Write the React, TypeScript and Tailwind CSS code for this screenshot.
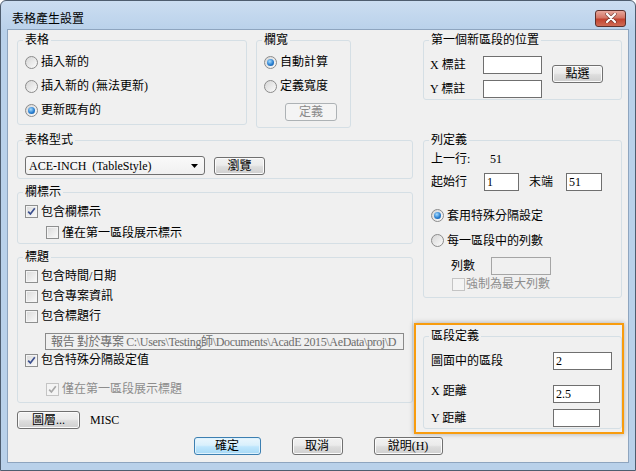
import clsx from "clsx";
import type { ReactNode } from "react";

const btn =
  "flex shrink-0 items-center justify-center rounded-[3px] border border-[#707070] bg-[linear-gradient(#f2f2f2,#ebebeb_45%,#dddddd_55%,#cfcfcf)] shadow-[inset_0_0_0_1px_#fbfbfb]";

function Group({ label, className, children }: { label: string; className?: string; children: ReactNode }) {
  return (
    <fieldset className={clsx("shrink-0 rounded-[3px] border border-[#d5dfe5]", className)}>
      <legend className="ml-[5px] px-[2px] leading-[16px]">{label}</legend>
      {children}
    </fieldset>
  );
}

function Radio({ checked }: { checked?: boolean }) {
  return (
    <span className="flex h-[13px] w-[13px] shrink-0 items-center justify-center rounded-full border border-[#8b8b8b] bg-[linear-gradient(135deg,#d6d6d6,#fbfbfb)]">
      {checked && (
        <span className="h-[7px] w-[7px] rounded-full bg-[radial-gradient(circle_at_40%_35%,#a6dcff,#2a7fd0_55%,#0c4e96)]" />
      )}
    </span>
  );
}

function Check({ checked, disabled }: { checked?: boolean; disabled?: boolean }) {
  return (
    <span
      className={clsx(
        "flex h-[13px] w-[13px] shrink-0 items-center justify-center border",
        disabled
          ? "border-[#c4c4c4] bg-[#f4f4f4]"
          : "border-[#8e8f8f] bg-[linear-gradient(135deg,#d9d9d9,#fbfbfb)] shadow-[inset_0_0_0_1px_#f4f4f4]"
      )}
    >
      {checked && (
        <svg width="9" height="9" viewBox="0 0 9 9">
          <path
            d="M1.2 4.6 L3.4 7 L7.8 1.2"
            fill="none"
            stroke={disabled ? "#a8a8a8" : "#3b4f8e"}
            strokeWidth="1.7"
          />
        </svg>
      )}
    </span>
  );
}

function Field({ value, className, disabled }: { value?: string; className?: string; disabled?: boolean }) {
  return (
    <div
      className={clsx(
        "flex h-[18px] shrink-0 items-center border pl-[2px]",
        disabled ? "border-[#a5a5a5] bg-[#f0f0f0]" : "border-[#6f6f6f] bg-white",
        className
      )}
    >
      {value}
    </div>
  );
}

export default function App() {
  return (
    <div className="h-[471px] w-[636px] bg-white font-['Liberation_Serif','Noto_Sans_CJK_TC',serif] text-[12px] leading-[16px] text-black">
      <div className="flex h-full flex-col rounded-t-[6px] border border-[#4e5d6f] bg-[linear-gradient(#cbddf1,#b9d1ea_30px)]">
        {/* title bar */}
        <div className="flex h-[28px] shrink-0 items-center pl-[11px] pr-[9px] pt-[6px]">
          <span className="font-['Noto_Sans_CJK_TC',sans-serif]">表格產生設置</span>
          <div className="ml-auto flex h-[17px] w-[31px] items-center justify-center rounded-[3px] border border-[#5c302c] bg-[linear-gradient(#e8a89c,#d47565_45%,#c2432f_55%,#cf6b55)]">
            <svg width="12" height="10" viewBox="0 0 12 10">
              <path d="M2 1 L10 9 M10 1 L2 9" stroke="#3a1d1a" strokeWidth="3.6" strokeLinecap="round" opacity="0.55" />
              <path d="M2 1 L10 9 M10 1 L2 9" stroke="#ffffff" strokeWidth="2.2" strokeLinecap="round" />
            </svg>
          </div>
        </div>

        {/* client area */}
        <div className="mx-[6px] flex h-[434px] shrink-0 flex-col border border-[#8ea5bf] bg-[#f0f0f0] pl-[9px] pr-[6px] pt-[2px]">
          {/* top row */}
          <div className="flex items-start">
            <Group label="表格" className="h-[93px] w-[230px]">
              <div className="flex flex-col pl-[7px] pt-[2px]">
                <div className="flex h-6 items-center gap-[3px]">
                  <Radio />
                  <span>插入新的</span>
                </div>
                <div className="flex h-6 items-center gap-[3px]">
                  <Radio />
                  <span>插入新的 (無法更新)</span>
                </div>
                <div className="flex h-6 items-center gap-[3px]">
                  <Radio checked />
                  <span>更新既有的</span>
                </div>
              </div>
            </Group>

            <Group label="欄寬" className="ml-[9px] h-[96px] w-[95px]">
              <div className="flex flex-col pl-[7px] pt-[2px]">
                <div className="flex h-6 items-center gap-[3px]">
                  <Radio checked />
                  <span>自動計算</span>
                </div>
                <div className="flex h-6 items-center gap-[3px]">
                  <Radio />
                  <span>定義寬度</span>
                </div>
                <div className="ml-[21px] mt-[5px] flex h-[18px] w-[52px] items-center justify-center rounded-[3px] border border-[#adb2b5] bg-[#f4f4f4] text-[#8a8a8a]">
                  定義
                </div>
              </div>
            </Group>

            <Group label="第一個新區段的位置" className="ml-auto h-[68px] w-[199px]">
              <div className="flex items-start pl-[6px] pt-[8px]">
                <div className="flex flex-col gap-[6px]">
                  <div className="flex items-center">
                    <span className="w-[53px]">X 標註</span>
                    <Field className="w-[59px]" />
                  </div>
                  <div className="flex items-center">
                    <span className="w-[53px]">Y 標註</span>
                    <Field className="w-[59px]" />
                  </div>
                </div>
                <div className={clsx(btn, "ml-[10px] mt-[9px] h-[18px] w-[51px]")}>點選</div>
              </div>
            </Group>
          </div>

          {/* middle */}
          <div className="mt-[4px] flex items-start">
            {/* left column */}
            <div className="flex w-[396px] flex-col">
              <Group label="表格型式" className="h-[47px]">
                <div className="flex items-center pl-[7px] pt-[8px]">
                  <div className="flex h-[19px] w-[180px] items-center rounded-[3px] border border-[#707070] bg-[linear-gradient(#fafafa,#f0f0f0)] pl-[3px] pr-[6px]">
                    <span>ACE-INCH&nbsp;&nbsp;(TableStyle)</span>
                    <svg className="ml-auto" width="7" height="4" viewBox="0 0 7 4">
                      <path d="M0 0 H7 L3.5 4 Z" fill="#000" />
                    </svg>
                  </div>
                  <div className={clsx(btn, "ml-[9px] h-[18px] w-[51px]")}>瀏覽</div>
                </div>
              </Group>

              <Group label="欄標示" className="mt-[5px] h-[60px]">
                <div className="flex flex-col pl-[7px] pt-px">
                  <div className="flex h-[21px] items-center gap-[3px]">
                    <Check checked />
                    <span>包含欄標示</span>
                  </div>
                  <div className="flex h-[21px] items-center gap-[3px] pl-[21px]">
                    <Check />
                    <span>僅在第一區段展示標示</span>
                  </div>
                </div>
              </Group>

              <Group label="標題" className="mt-[5px] h-[154px]">
                <div className="flex flex-col pl-[7px] pt-px">
                  <div className="flex h-5 items-center gap-[3px]">
                    <Check />
                    <span>包含時間/日期</span>
                  </div>
                  <div className="flex h-5 items-center gap-[3px]">
                    <Check />
                    <span>包含專案資訊</span>
                  </div>
                  <div className="flex h-5 items-center gap-[3px]">
                    <Check />
                    <span>包含標題行</span>
                  </div>
                  <div className="ml-[20px] mt-[7px] flex h-[17px] w-[359px] items-center overflow-hidden whitespace-nowrap border border-[#8a8a8a] pl-[5px] tracking-[-0.35px] text-[#6d6d6d]">
                    {"報告 對於專案 C:\\Users\\Testing師\\Documents\\AcadE 2015\\AeData\\proj\\D"}
                  </div>
                  <div className="flex h-5 items-center gap-[3px]">
                    <Check checked />
                    <span>包含特殊分隔設定值</span>
                  </div>
                  <div className="mt-[9px] flex h-5 items-center gap-[3px] pl-[21px] text-[#8d8d8d]">
                    <Check checked disabled />
                    <span>僅在第一區段展示標題</span>
                  </div>
                </div>
              </Group>

              <div className="mt-[8px] flex items-center">
                <div className={clsx(btn, "h-[18px] w-[63px]")}>圖層...</div>
                <span className="ml-[10px]">MISC</span>
              </div>
            </div>

            {/* right column */}
            <div className="ml-[10px] flex w-[199px] flex-col">
              <Group label="列定義" className="h-[166px]">
                <div className="flex flex-col pl-[7px] pt-px">
                  <div className="flex h-5 items-center">
                    <span className="w-[59px]">上一行:</span>
                    <span>51</span>
                  </div>
                  <div className="mt-[4px] flex h-[18px] items-center">
                    <span className="w-[53px]">起始行</span>
                    <Field className="w-[35px]" value="1" />
                    <span className="ml-[10px] w-[37px]">末端</span>
                    <Field className="w-[36px]" value="51" />
                  </div>
                  <div className="mt-[12px] flex h-[25px] items-center gap-[3px]">
                    <Radio checked />
                    <span>套用特殊分隔設定</span>
                  </div>
                  <div className="flex h-[25px] items-center gap-[3px]">
                    <Radio />
                    <span>每一區段中的列數</span>
                  </div>
                  <div className="mt-[4px] flex h-[17px] items-center pl-[20px]">
                    <span className="w-[40px]">列數</span>
                    <Field className="h-[17px] w-[60px]" disabled />
                  </div>
                  <div className="mt-[2px] flex h-[16px] items-center gap-px pl-[21px] text-[#8d8d8d]">
                    <Check disabled />
                    <span>強制為最大列數</span>
                  </div>
                </div>
              </Group>

              <div className="relative mt-[30px]">
                <Group label="區段定義" className="h-[101px] w-full">
                  <div className="flex flex-col pl-[7px] pt-[8px]">
                    <div className="flex h-[17px] items-center">
                      <span className="w-[122px]">圖面中的區段</span>
                      <Field className="h-[17px] w-[59px]" value="2" />
                    </div>
                    <div className="mt-[16px] flex h-[17px] items-center">
                      <span className="mb-[6px] w-[122px]">X 距離</span>
                      <Field className="h-[17px] w-[47px]" value="2.5" />
                    </div>
                    <div className="mt-[7px] flex h-[18px] items-center">
                      <span className="w-[122px]">Y 距離</span>
                      <Field className="w-[47px]" />
                    </div>
                  </div>
                </Group>
                <div className="pointer-events-none absolute -bottom-[5px] -left-[9px] -right-[2px] -top-[5px] border-2 border-[#f89c0e] shadow-[0_0_5px_rgba(0,0,0,0.3)]" />
              </div>
            </div>
          </div>

          {/* bottom buttons */}
          <div className="mt-[8px] flex justify-center gap-[31px] pr-[3px]">
            <div className="flex h-[18px] w-[67px] items-center justify-center rounded-[3px] border border-[#3c7fb1] bg-[linear-gradient(#eaf6fd,#d9f0fc_45%,#bee6fd_55%,#a7d9f5)] shadow-[inset_0_0_0_1px_#dff2fd]">
              確定
            </div>
            <div className={clsx(btn, "h-[18px] w-[51px]")}>取消</div>
            <div className={clsx(btn, "h-[18px] w-[69px]")}>說明(H)</div>
          </div>
        </div>
      </div>
    </div>
  );
}
